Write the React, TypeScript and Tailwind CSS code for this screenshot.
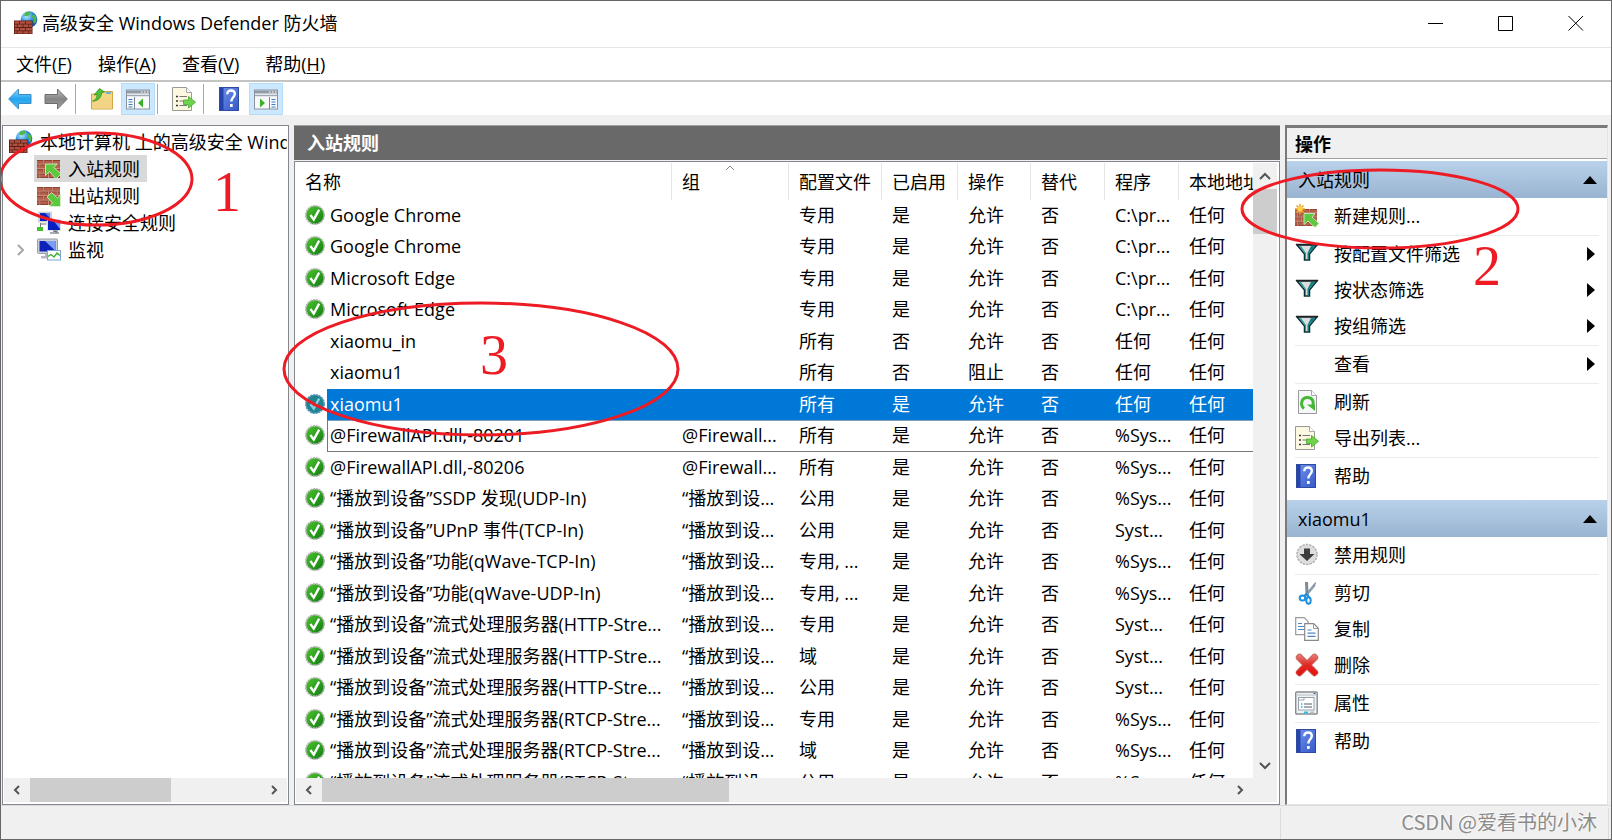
import type { ReactNode } from "react";
import clsx from "clsx";

interface Rule {
  name: string;
  group?: string;
  profile: string;
  enabled: boolean;
  action?: string;
  program: string;
}

const stream = "“播放到设备”流式处理服务器";
const castGroup = "“播放到设…";

const rules: Rule[] = [
  { name: "Google Chrome", profile: "专用", enabled: true, program: "C:\\pr..." },
  { name: "Google Chrome", profile: "专用", enabled: true, program: "C:\\pr..." },
  { name: "Microsoft Edge", profile: "专用", enabled: true, program: "C:\\pr..." },
  { name: "Microsoft Edge", profile: "专用", enabled: true, program: "C:\\pr..." },
  { name: "xiaomu_in", profile: "所有", enabled: false, program: "任何" },
  { name: "xiaomu1", profile: "所有", enabled: false, action: "阻止", program: "任何" },
  { name: "xiaomu1", profile: "所有", enabled: true, program: "任何" },
  { name: "@FirewallAPI.dll,-80201", group: "@Firewall...", profile: "所有", enabled: true, program: "%Sys..." },
  { name: "@FirewallAPI.dll,-80206", group: "@Firewall...", profile: "所有", enabled: true, program: "%Sys..." },
  { name: "“播放到设备”SSDP 发现(UDP-In)", group: castGroup, profile: "公用", enabled: true, program: "%Sys..." },
  { name: "“播放到设备”UPnP 事件(TCP-In)", group: castGroup, profile: "公用", enabled: true, program: "Syst..." },
  { name: "“播放到设备”功能(qWave-TCP-In)", group: castGroup, profile: "专用, ...", enabled: true, program: "%Sys..." },
  { name: "“播放到设备”功能(qWave-UDP-In)", group: castGroup, profile: "专用, ...", enabled: true, program: "%Sys..." },
  { name: `${stream}(HTTP-Stre...`, group: castGroup, profile: "专用", enabled: true, program: "Syst..." },
  { name: `${stream}(HTTP-Stre...`, group: castGroup, profile: "域", enabled: true, program: "Syst..." },
  { name: `${stream}(HTTP-Stre...`, group: castGroup, profile: "公用", enabled: true, program: "Syst..." },
  { name: `${stream}(RTCP-Stre...`, group: castGroup, profile: "专用", enabled: true, program: "%Sys..." },
  { name: `${stream}(RTCP-Stre...`, group: castGroup, profile: "域", enabled: true, program: "%Sys..." },
  { name: `${stream}(RTCP-Stre...`, group: castGroup, profile: "公用", enabled: true, program: "%Sys..." },
];

const SELECTED = 6;
const FOCUSED = 7;

const menus = [
  { label: "文件", accel: "F" },
  { label: "操作", accel: "A" },
  { label: "查看", accel: "V" },
  { label: "帮助", accel: "H" },
];

/* ---------- icons ---------- */

function Svg({ children, className = "size-6" }: { children: ReactNode; className?: string }) {
  return (
    <svg viewBox="0 0 24 24" className={clsx("shrink-0", className)} aria-hidden="true">
      {children}
    </svg>
  );
}

function Bricks({ x, y, w, h }: { x: number; y: number; w: number; h: number }) {
  return (
    <svg x={x} y={y} width={w} height={h} viewBox="0 0 24 20" preserveAspectRatio="none">
      <rect width="24" height="20" fill="#8e3f30" />
      <path d="M0 1h6v3H0zM8 1h7v3H8zM17 1h7v3h-7zM0 6h2v3H0zM4 6h7v3H4zM13 6h7v3h-7zM22 6h2v3h-2zM0 11h6v3H0zM8 11h7v3H8zM17 11h7v3h-7zM0 16h2v3H0zM4 16h7v3H4zM13 16h7v3h-7z" fill="#b5614b" />
      <path d="M0 4.5h24M0 9.5h24M0 14.5h24M7 0v4.5M16 0v4.5M3 5v4.5M12 5v4.5M21 5v4.5M7 10v4.5M16 10v4.5M3 15v5M12 15v5M21 15v5" stroke="#d9a08c" strokeWidth="0.9" />
    </svg>
  );
}

function FirewallIcon() {
  return (
    <Svg>
      <defs>
        <radialGradient id="globe" cx="0.35" cy="0.3" r="0.8">
          <stop offset="0" stopColor="#b8ecff" />
          <stop offset="0.5" stopColor="#2c8fe0" />
          <stop offset="1" stopColor="#0b3f9c" />
        </radialGradient>
      </defs>
      <circle cx="15" cy="8.5" r="8.3" fill="url(#globe)" />
      <path d="M11 1.800c2-1 4-1.200 5.500-.8-.5 1.500.5 2-1 3-1 .6-1.500.5-2.200 1.500-.8-.6-1.800-.8-3.300-.2zM18.500 4c1.600-.6 3 .8 3.800 2.800.4 1.800.1 4-1.300 5.800-1.200-.8-1.300-2-1-3.600-1.300-1.200-2.600-3.200-1.500-5z" fill="#4fb848" />
      <rect y="9.500" width="18.500" height="13.500" fill="#5a1d14" />
      <path d="M.8 10.300h4.400v2.500H.8zM6 10.300h5.200v2.500H6zM12 10.300h5.800v2.500H12zM.8 13.600h2v2.500h-2zM3.600 13.600h5v2.500h-5zM9.400 13.600h5v2.500h-5zM15.200 13.600h2.600v2.500h-2.600zM.8 16.900h4.400v2.500H.8zM6 16.900h5.200v2.500H6zM12 16.900h5.800v2.500H12zM.8 20.200h2v2.200h-2zM3.600 20.200h5v2.200h-5zM9.400 20.200h5v2.200h-5zM15.200 20.200h2.600v2.200h-2.600z" fill="#b0503f" />
    </Svg>
  );
}

function InboundIcon() {
  return (
    <Svg>
      <Bricks x={0} y={3} w={23} h={18} />
      <path d="M8.500 7h11.500l-3 3.500 7 6.500-5 5-6.500-7.500-4 4z" fill="#5cc83e" stroke="#d8f5cd" strokeWidth="0.8" />
    </Svg>
  );
}

function OutboundIcon() {
  return (
    <Svg>
      <Bricks x={0} y={3} w={23} h={18} />
      <path d="M23.500 22.500H12l3.500-3.500-5.500-6 4.500-4.500 6 5.500 3-3.500z" fill="#5cc83e" stroke="#d8f5cd" strokeWidth="0.8" />
    </Svg>
  );
}

function NewRuleIcon() {
  return (
    <Svg>
      <Bricks x={0} y={5} w={22} h={17} />
      <path d="M9 9.500h11l-3 3.500 7 6.500-4 4-7-6.500-4 3.500z" fill="#5cc83e" stroke="#d8f5cd" strokeWidth="0.8" />
      <path d="M5 0v10M0 5h10M1.500 1.500l7 7M8.500 1.500l-7 7" stroke="#f0a020" strokeWidth="1.500" />
      <circle cx="5" cy="5" r="2.600" fill="#ffd24d" />
    </Svg>
  );
}

function ConnectionIcon() {
  return (
    <Svg>
      <rect x="1" y="0.500" width="14" height="11" fill="#cfd3d8" />
      <rect x="3" y="2" width="10" height="8" fill="#0a1fc4" />
      <path d="M8 2h5v5z" fill="#5f86f0" />
      <rect x="10" y="8" width="14" height="12" fill="#dfe3ea" />
      <rect x="11" y="9" width="12" height="10" fill="#0a1fc4" />
      <path d="M16 9h7v9z" fill="#6f96f4" />
      <path d="M13 22h9M16 20h4v2" stroke="#8a9099" strokeWidth="1.500" />
      <path d="M3.500 12v4M3.500 13h6" stroke="#777" />
      <rect x="0" y="16" width="6" height="4" fill="#46c22c" />
    </Svg>
  );
}

function MonitorIcon() {
  return (
    <Svg>
      <rect x="0.500" y="1" width="20" height="14.500" rx="1" fill="#c9ced6" stroke="#98a0ab" />
      <rect x="2.500" y="3" width="16" height="10.500" fill="#0c22b8" />
      <path d="M8 3h10.500v10z" fill="#7b9df4" />
      <path d="M8 15.500h5v2.500H8zM4 18h10v2.500H4z" fill="#b4bac3" />
      <rect x="10.500" y="12.500" width="13" height="9.500" fill="#fff" stroke="#7ba6d8" />
      <path d="M11 18.500l3-2 3 2.500 3-4 3 2.500" fill="none" stroke="#3db02e" strokeWidth="1.400" />
    </Svg>
  );
}

function CheckIcon({ selected }: { selected?: boolean }) {
  return (
    <Svg className="size-5">
      <defs>
        <linearGradient id="check" x1="0" y1="0" x2="1" y2="1">
          <stop offset="0" stopColor="#4fc62f" />
          <stop offset="1" stopColor="#0d7a10" />
        </linearGradient>
      </defs>
      <circle cx="12" cy="12" r="11" fill={selected ? "#1c8590" : "url(#check)"} stroke={selected ? "#5b94bb" : "#b4b4b4"} strokeWidth="2" strokeDasharray="2.500 1" />
      <path d="M6.500 12l4 5.500L17 5.500" fill="none" stroke={selected ? "#8fcbe4" : "#fff"} strokeWidth="2.800" />
    </Svg>
  );
}

function ArrowIcon({ forward }: { forward?: boolean }) {
  return (
    <Svg>
      <defs>
        <linearGradient id="back" x1="0" y1="0" x2="0" y2="1">
          <stop offset="0" stopColor="#8fd8fc" />
          <stop offset="0.500" stopColor="#22a4ee" />
          <stop offset="1" stopColor="#4fc0f8" />
        </linearGradient>
        <linearGradient id="fwd" x1="0" y1="0" x2="0" y2="1">
          <stop offset="0" stopColor="#c0c0c0" />
          <stop offset="0.500" stopColor="#858585" />
          <stop offset="1" stopColor="#a2a2a2" />
        </linearGradient>
      </defs>
      {forward ? (
        <path d="M23.300 12L13.500 2v5.500H1v9h12.500V22z" fill="url(#fwd)" stroke="#6c6c6c" />
      ) : (
        <path d="M.7 12L10.500 2v5.500H23v9H10.500V22z" fill="url(#back)" stroke="#3b8cc4" />
      )}
    </Svg>
  );
}

function FolderUpIcon() {
  return (
    <Svg>
      <path d="M1.500 7h8l2-2.500h11V22h-21z" fill="#f4d683" stroke="#cfa548" />
      <path d="M2 11h20v10.500H2z" fill="#f3d486" />
      <path d="M16 6h5" stroke="#49a4dc" strokeWidth="1.500" />
      <path d="M2.500 14c3.500-1 4.500-3.500 4.500-6.500L4 8 9.500 1.500 14.500 5l-3 .8C11.500 10.500 8 14.500 2.500 14z" fill="#4cc036" stroke="#2c8a1c" strokeWidth="0.700" />
    </Svg>
  );
}

function PaneIcon({ right }: { right?: boolean }) {
  return (
    <Svg>
      <rect x="0.500" y="3" width="23" height="19" fill="#f7f9fb" stroke="#8b929b" />
      <path d="M1 3.500h22v3H1z" fill="#929aa5" />
      <path d="M15 5h1.500M18 5h1.500M21 5h1.500" stroke="#fff" />
      <path d="M1 8.500h22" stroke="#a0a8b3" strokeWidth="1.500" />
      {right ? (
        <>
          <path d="M15.500 10v12" stroke="#7c8490" />
          <path d="M17.500 12.500h4M17.500 15h4M17.500 17.500h4M17.500 20h4" stroke="#3b7ec4" />
          <path d="M6 11.500v9l5-4.500z" fill="#37b026" />
        </>
      ) : (
        <>
          <path d="M8.500 10v12" stroke="#7c8490" />
          <path d="M2.500 12.500h4M2.500 15h4M2.500 17.500h4M2.500 20h4" stroke="#3b7ec4" />
          <path d="M17 11.500v9L12 16z" fill="#37b026" />
        </>
      )}
    </Svg>
  );
}

function ExportIcon() {
  return (
    <Svg>
      <path d="M.5.500h14l5 5v18H.5z" fill="#fdf8e2" stroke="#9a9a94" />
      <path d="M14.500.500v5h5" fill="#fff" stroke="#aaa" />
      <path d="M4 9.500h2M4 14h2M4 18.500h2" stroke="#333" strokeWidth="1.400" />
      <path d="M7.500 9.500h7.500M7.500 14h4M7.500 18.500h7.500" stroke="#777" strokeWidth="1.200" />
      <path d="M11.500 13h5V9.500l7 5.700-7 5.800v-3.500h-5z" fill="#6fd44c" stroke="#43a827" strokeWidth="0.800" />
    </Svg>
  );
}

function HelpIcon() {
  return (
    <Svg>
      <defs>
        <linearGradient id="book" x1="0" y1="0" x2="1" y2="1">
          <stop offset="0" stopColor="#6f92ec" />
          <stop offset="1" stopColor="#3558c8" />
        </linearGradient>
      </defs>
      <rect x="1.500" y="0.500" width="19" height="23" fill="url(#book)" stroke="#2f4ba0" />
      <path d="M2 1h3.500v22H2z" fill="#2545ac" />
      <path d="M9.300 7.200c0-2.600 1.600-3.700 3.700-3.700s3.800 1.200 3.800 3.600c0 3.200-3.500 3.200-3.500 7.400" fill="none" stroke="#fff" strokeWidth="2.400" />
      <rect x="12" y="17" width="2.700" height="2.900" fill="#fff" />
    </Svg>
  );
}

function FilterIcon() {
  return (
    <Svg>
      <path d="M2 3h20l-7.500 9v6H9.500v-6z" fill="#dcdcdc" stroke="#0b2f33" strokeWidth="1.500" />
      <path d="M16 4h4.500L14 11.500v6h-1.500V11z" fill="#138086" />
      <path d="M4 4h2l5 7v6h-1v-5.500z" fill="#2c9ca0" />
      <path d="M1 2.500h22" stroke="#222" strokeWidth="1.500" />
    </Svg>
  );
}

function RefreshIcon() {
  return (
    <Svg>
      <path d="M3.500.500h13l5 5v18h-18z" fill="#f6f7f8" stroke="#9a9a9a" />
      <path d="M16.500.500v5h5" fill="#fff" stroke="#aaa" />
      <path d="M9 18.500c-4-3-3-11 3.500-11 5 0 6.500 4 5.500 8" fill="none" stroke="#44b834" strokeWidth="3" />
      <path d="M12 14.500h8v6.500z" fill="#44b834" />
    </Svg>
  );
}

function DisableIcon() {
  return (
    <Svg>
      <circle cx="12" cy="11.500" r="10" fill="#dedede" stroke="#b2b2b2" strokeWidth="1.500" strokeDasharray="2.500 1" />
      <path d="M9 5.500h6V11h4.500L12 18 4.500 11H9z" fill="#3d3d3d" />
    </Svg>
  );
}

function CutIcon() {
  return (
    <Svg>
      <path d="M10 1l3 0 .5 13h-3z" fill="#7d8b99" />
      <path d="M20.500 1.500l-1 4-8.500 10-1.500-1z" fill="#94a3b2" stroke="#5c6b7a" strokeWidth="0.600" />
      <ellipse cx="7.500" cy="17" rx="2.800" ry="2.600" fill="#fff" stroke="#1c8fe0" strokeWidth="2" />
      <ellipse cx="13.500" cy="19.500" rx="2.200" ry="3.200" fill="#fff" stroke="#1c8fe0" strokeWidth="2" />
      <path d="M9.500 14.500l2-1.500 2.500 3" fill="none" stroke="#1c8fe0" strokeWidth="2" />
    </Svg>
  );
}

function CopyIcon() {
  return (
    <Svg>
      <path d="M.7.700h8.500l4 4v13H.7z" fill="#fff" stroke="#9a9a9a" strokeWidth="1.200" />
      <path d="M3 6.500h4M3 9.500h6M3 12.500h6" stroke="#4b86c8" />
      <path d="M9.700 6.700h9l4.600 4.600v12H9.700z" fill="#fff" stroke="#8a8a8a" strokeWidth="1.200" />
      <path d="M18.500 6.700v4.800h4.800" fill="none" stroke="#9a9a9a" />
      <path d="M12.500 13h4M12.500 16.200h8M12.500 19.400h8" stroke="#4b86c8" strokeWidth="1.200" />
    </Svg>
  );
}

function DeleteIcon() {
  return (
    <Svg>
      <defs>
        <linearGradient id="del" x1="0" y1="0" x2="0" y2="1">
          <stop offset="0" stopColor="#e8827c" />
          <stop offset="0.500" stopColor="#e02a24" />
          <stop offset="1" stopColor="#e80c0c" />
        </linearGradient>
      </defs>
      <path d="M4.500 4.500L19.500 19.500M19.500 4.500L4.500 19.500" stroke="#c86460" strokeWidth="7.400" strokeLinecap="round" />
      <path d="M4.500 1l7.500 7 7.500-7 3.500 3.500-7 7.500 7 7.500-3.500 3.500-7.500-7-7.500 7L1 19.500 8 12 1 4.500z" fill="url(#del)" />
    </Svg>
  );
}

function PropertiesIcon() {
  return (
    <Svg>
      <rect x="0.700" y="1" width="21.500" height="22" rx="1" fill="#eef0f2" stroke="#868c93" strokeWidth="1.400" />
      <path d="M2 4h19" stroke="#b9bfc6" />
      <path d="M18.500 2.500h2" stroke="#3a5f8c" />
      <rect x="3.500" y="6.500" width="15.500" height="12.500" fill="#fff" stroke="#9aa3ad" />
      <path d="M4 9h5V7" fill="none" stroke="#9aa3ad" />
      <path d="M6 13h1.500M6 16h1.500" stroke="#22b8e8" strokeWidth="1.500" />
      <path d="M9 13h8M9 16h8" stroke="#8a929b" strokeWidth="1.300" />
      <path d="M9 21.500h4" stroke="#22c0ea" strokeWidth="2" />
      <path d="M15 21.500h4" stroke="#b9bfc6" strokeWidth="2" />
    </Svg>
  );
}

const chevrons = {
  left: "M8 1L4 5l4 4",
  right: "M4 1l4 4-4 4",
  up: "M1 8l5-5 5 5",
  down: "M1 3l5 5 5-5",
};

function ScrollArrow({ dir }: { dir: keyof typeof chevrons }) {
  const vertical = dir === "up" || dir === "down";
  return (
    <button
      aria-label={`Scroll ${dir}`}
      className={clsx("flex shrink-0 items-center justify-center", vertical ? "h-[26px] w-6" : "h-6 w-[26px]")}
    >
      <svg viewBox="0 0 12 10" className="h-[10px] w-[12px]" aria-hidden="true">
        <path d={chevrons[dir]} fill="none" stroke="#555" strokeWidth="2" />
      </svg>
    </button>
  );
}

/* ---------- toolbar ---------- */

function ToolButton({ label, active, children }: { label: string; active?: boolean; children: ReactNode }) {
  return (
    <button
      aria-label={label}
      className={clsx(
        "flex h-8 w-[34px] items-center justify-center",
        active && "border border-[#b5dcf8] bg-[#cce8ff]"
      )}
    >
      {children}
    </button>
  );
}

function ToolSeparator() {
  return <div className="mr-[7px] h-[30px] w-px bg-[#a8a8a8]" />;
}

/* ---------- tree ---------- */

function TreeItem({ icon, label, selected, expandable }: { icon: ReactNode; label: string; selected?: boolean; expandable?: boolean }) {
  return (
    <li className="flex h-[27px] items-center">
      <span className="flex w-[30px] shrink-0 justify-center pl-1">
        {expandable && (
          <svg viewBox="0 0 8 12" className="h-3 w-2" aria-hidden="true">
            <path d="M1 1l5 5-5 5" fill="none" stroke="#a6a6a6" strokeWidth="2" />
          </svg>
        )}
      </span>
      <button
        className={clsx(
          "flex h-full items-center gap-[7px] pr-[7px] pl-[3px] whitespace-nowrap",
          selected && "bg-[#d9d9d9]"
        )}
      >
        {icon}
        {label}
      </button>
    </li>
  );
}

/* ---------- actions pane ---------- */

function SectionHeader({ title }: { title: string }) {
  return (
    <button className="flex h-[37px] w-full shrink-0 items-center justify-between bg-linear-to-b from-[#b9d1ea] to-[#99b4d1] pr-2.5 pl-[11px]">
      {title}
      <svg viewBox="0 0 14 8" className="h-2 w-[14px]" aria-hidden="true">
        <path d="M7 0l7 8H0z" fill="#000" />
      </svg>
    </button>
  );
}

function ActionItem({ icon, label, submenu }: { icon?: ReactNode; label: string; submenu?: boolean }) {
  return (
    <button className="flex h-9 w-full shrink-0 items-center pr-3 pl-2 text-left">
      <span className="w-[39px] shrink-0">{icon}</span>
      <span className="flex-1">{label}</span>
      {submenu && (
        <svg viewBox="0 0 8 14" className="h-[14px] w-2" aria-hidden="true">
          <path d="M0 0l8 7-8 7z" fill="#000" />
        </svg>
      )}
    </button>
  );
}

function ActionSeparator() {
  return <div className="mx-2 h-0.5 shrink-0 border-b border-[#ebebeb]" />;
}

/* ---------- rule list ---------- */

function RuleRow({ rule, index }: { rule: Rule; index: number }) {
  const selected = index === SELECTED;
  const focused = index === FOCUSED;
  const cell = clsx(
    "overflow-hidden p-0 pb-0.5 pl-2.5",
    selected && "bg-[#0078d7] text-white",
    focused && "border-y border-t-[#7f9fb8] border-b-[#777]"
  );
  return (
    <tr className="odd:h-[31px] even:h-8">
      <td className="p-0 pb-0.5 pl-[9px]">{rule.enabled && <CheckIcon selected={selected} />}</td>
      <td
        className={clsx(
          "overflow-hidden p-0 pb-0.5",
          selected && "bg-[#0078d7] text-white",
          focused ? "border-y border-l border-t-[#7f9fb8] border-b-[#777] border-l-[#777] pl-0.5" : "pl-[3px]"
        )}
      >
        {rule.name}
      </td>
      <td className={cell}>{rule.group}</td>
      <td className={cell}>{rule.profile}</td>
      <td className={cell}>{rule.enabled ? "是" : "否"}</td>
      <td className={cell}>{rule.action ?? "允许"}</td>
      <td className={cell}>否</td>
      <td className={cell}>{rule.program}</td>
      <td className={cell}>任何</td>
    </tr>
  );
}

function RuleTable() {
  const th = "h-[37px] overflow-hidden border-r border-[#e5e5e5] p-0 pl-2.5 font-normal";
  return (
    <table className="w-full table-fixed border-separate border-spacing-0 text-left leading-6 whitespace-nowrap">
      <colgroup>
        <col className="w-[31px]" />
        <col />
        <col className="w-[117px]" />
        <col className="w-[93px]" />
        <col className="w-[76px]" />
        <col className="w-[73px]" />
        <col className="w-[74px]" />
        <col className="w-[74px]" />
        <col className="w-[74px]" />
      </colgroup>
      <thead>
        <tr>
          <th colSpan={2} className="h-[37px] border-r border-[#e5e5e5] p-0 pl-[9px] font-normal">
            名称
          </th>
          <th className={clsx(th, "relative")}>
            组
            <svg viewBox="0 0 10 5" className="absolute top-0.5 left-1/2 h-[5px] w-[10px] -translate-x-1/2" aria-hidden="true">
              <path d="M1 5l4-4 4 4" fill="none" stroke="#8a8a8a" />
            </svg>
          </th>
          <th className={th}>配置文件</th>
          <th className={th}>已启用</th>
          <th className={th}>操作</th>
          <th className={th}>替代</th>
          <th className={th}>程序</th>
          <th className="overflow-hidden p-0 pl-2.5 font-normal">本地地址</th>
        </tr>
      </thead>
      <tbody>
        {rules.map((rule, i) => (
          <RuleRow key={i} rule={rule} index={i} />
        ))}
      </tbody>
    </table>
  );
}

/* ---------- red pen marks over the window ---------- */

function Annotations() {
  const digit = "absolute font-['Liberation_Serif',serif] text-[56px] leading-[56px] text-[#ed1c24]";
  return (
    <div className="pointer-events-none absolute inset-0 overflow-hidden">
      <svg className="size-full" aria-hidden="true">
        <g fill="none" stroke="#ed1c24" strokeWidth="3">
          <ellipse cx="95" cy="178" rx="96" ry="46" />
          <ellipse cx="1379" cy="208" rx="138" ry="39" />
          <ellipse cx="480" cy="368" rx="197" ry="66" />
        </g>
      </svg>
      <span className={clsx(digit, "top-[163px] left-[212px]")}>1</span>
      <span className={clsx(digit, "top-[237px] left-[1472px]")}>2</span>
      <span className={clsx(digit, "top-[326px] left-[479px]")}>3</span>
    </div>
  );
}

export default function App() {
  return (
    <div className="relative flex h-screen flex-col overflow-hidden border border-[#666] bg-[#f0f0f0] font-['Open_Sans','Noto_Sans_CJK_SC',sans-serif] text-[18px] leading-6 text-black">
      {/* Title bar */}
      <header className="flex h-[47px] shrink-0 items-center border-b border-[#e5e5e5] bg-white pb-0.5 pl-[13px]">
        <FirewallIcon />
        <h1 className="flex-1 pl-1">高级安全 Windows Defender 防火墙</h1>
        <button aria-label="Minimize" className="flex h-full w-[70px] items-center justify-center">
          <svg viewBox="0 0 16 16" className="size-4" aria-hidden="true">
            <path d="M0 8.500h15" stroke="#000" />
          </svg>
        </button>
        <button aria-label="Maximize" className="flex h-full w-[70px] items-center justify-center">
          <svg viewBox="0 0 16 16" className="size-4" aria-hidden="true">
            <path d="M.5 1.500h14v14H.5z" fill="none" stroke="#000" />
          </svg>
        </button>
        <button aria-label="Close" className="flex h-full w-[70px] items-center justify-center">
          <svg viewBox="0 0 16 16" className="size-4" aria-hidden="true">
            <path d="M.5 1l14.500 14.500M15 1L.5 15.500" stroke="#000" />
          </svg>
        </button>
      </header>

      {/* Menu bar */}
      <nav className="flex h-[34px] shrink-0 items-center border-b-2 border-[#c4c4c4] bg-white pl-0.5">
        {menus.map((m) => (
          <button key={m.accel} className="px-[13px]">
            {m.label}(<span className="underline underline-offset-2">{m.accel}</span>)
          </button>
        ))}
      </nav>

      {/* Toolbar */}
      <div className="flex shrink-0 items-center gap-0.5 bg-white pt-px pl-0.5">
        <ToolButton label="Back">
          <ArrowIcon />
        </ToolButton>
        <ToolButton label="Forward">
          <ArrowIcon forward />
        </ToolButton>
        <ToolSeparator />
        <ToolButton label="Up one level">
          <FolderUpIcon />
        </ToolButton>
        <ToolButton label="Console tree" active>
          <PaneIcon />
        </ToolButton>
        <ToolSeparator />
        <ToolButton label="Export list">
          <ExportIcon />
        </ToolButton>
        <ToolSeparator />
        <ToolButton label="Help">
          <HelpIcon />
        </ToolButton>
        <ToolButton label="Action pane" active>
          <PaneIcon right />
        </ToolButton>
      </div>

      <main className="flex min-h-0 flex-1 gap-[5px] pt-[10px] pr-[3px] pl-px">
        {/* Console tree */}
        <aside className="flex w-[287px] shrink-0 flex-col border border-[#828790] bg-white px-px pt-0.5 pb-0.5">
          <div className="min-h-0 flex-1 overflow-hidden">
            <button className="flex h-[27px] w-full items-center gap-[7px] pl-[5px] text-left whitespace-nowrap">
              <FirewallIcon />
              <span className="min-w-0 flex-1 overflow-hidden">本地计算机 上的高级安全 Windows</span>
            </button>
            <ul>
              <TreeItem icon={<InboundIcon />} label="入站规则" selected />
              <TreeItem icon={<OutboundIcon />} label="出站规则" />
              <TreeItem icon={<ConnectionIcon />} label="连接安全规则" />
              <TreeItem icon={<MonitorIcon />} label="监视" expandable />
            </ul>
          </div>
          <div className="flex h-6 bg-[#f0f0f0]">
            <ScrollArrow dir="left" />
            <div className="flex-1">
              <div className="h-full w-[61%] bg-[#cdcdcd]" />
            </div>
            <ScrollArrow dir="right" />
          </div>
        </aside>

        {/* Rules */}
        <section className="flex min-w-0 flex-1 flex-col gap-px">
          <h2 className="flex h-[35px] shrink-0 items-center border-t border-[#a0a0a0] bg-[#696969] pl-[13px] font-bold text-white">
            入站规则
          </h2>
          <div className="flex min-h-0 flex-1 flex-col border border-[#828790] bg-white pt-px pr-0.5 pb-0.5 pl-px">
            <div className="flex min-h-0 flex-1">
              <div className="min-w-0 flex-1 overflow-hidden">
                <RuleTable />
              </div>
              <div className="flex w-6 flex-col bg-[#f0f0f0]">
                <ScrollArrow dir="up" />
                <div className="flex-1">
                  <div className="h-[8%] bg-[#cdcdcd]" />
                </div>
                <ScrollArrow dir="down" />
              </div>
            </div>
            <div className="flex h-6 bg-[#f0f0f0] pr-6">
              <ScrollArrow dir="left" />
              <div className="flex-1">
                <div className="h-full w-[45%] bg-[#cdcdcd]" />
              </div>
              <ScrollArrow dir="right" />
            </div>
          </div>
        </section>

        {/* Actions */}
        <aside className="flex w-[323px] shrink-0 flex-col overflow-hidden border-t-[3px] border-r border-b border-l-2 border-t-[#7a7a7a] border-r-[#e3e3e3] border-b-[#e3e3e3] border-l-[#7a7a7a] bg-white">
          <h2 className="mb-0.5 flex h-[31px] shrink-0 items-center border-b border-[#a0a0a0] bg-[#f0f0f0] pt-0.5 pl-2 font-bold">
            操作
          </h2>
          <SectionHeader title="入站规则" />
          <ActionItem icon={<NewRuleIcon />} label="新建规则..." />
          <ActionSeparator />
          <ActionItem icon={<FilterIcon />} label="按配置文件筛选" submenu />
          <ActionItem icon={<FilterIcon />} label="按状态筛选" submenu />
          <ActionItem icon={<FilterIcon />} label="按组筛选" submenu />
          <ActionSeparator />
          <ActionItem label="查看" submenu />
          <ActionSeparator />
          <ActionItem icon={<RefreshIcon />} label="刷新" />
          <ActionItem icon={<ExportIcon />} label="导出列表..." />
          <ActionSeparator />
          <ActionItem icon={<HelpIcon />} label="帮助" />
          <div className="h-1.5 shrink-0" />
          <SectionHeader title="xiaomu1" />
          <ActionItem icon={<DisableIcon />} label="禁用规则" />
          <ActionSeparator />
          <ActionItem icon={<CutIcon />} label="剪切" />
          <ActionItem icon={<CopyIcon />} label="复制" />
          <ActionItem icon={<DeleteIcon />} label="删除" />
          <ActionSeparator />
          <ActionItem icon={<PropertiesIcon />} label="属性" />
          <ActionSeparator />
          <ActionItem icon={<HelpIcon />} label="帮助" />
        </aside>
      </main>

      {/* Status bar */}
      <footer className="flex h-[34px] shrink-0 justify-end border-t border-[#dcdcdc] pt-0.5 pr-0.5">
        <div className="flex w-[329px] items-center justify-end border-x border-[#dcdcdc] pr-[11px] pb-1">
          <span className="font-['Noto_Sans_CJK_SC',sans-serif] text-[20px] leading-6 text-[#8c8c8c] [text-shadow:-1px_-1px_0_#fff]">
            CSDN @爱看书的小沐
          </span>
        </div>
      </footer>

      <Annotations />
    </div>
  );
}
